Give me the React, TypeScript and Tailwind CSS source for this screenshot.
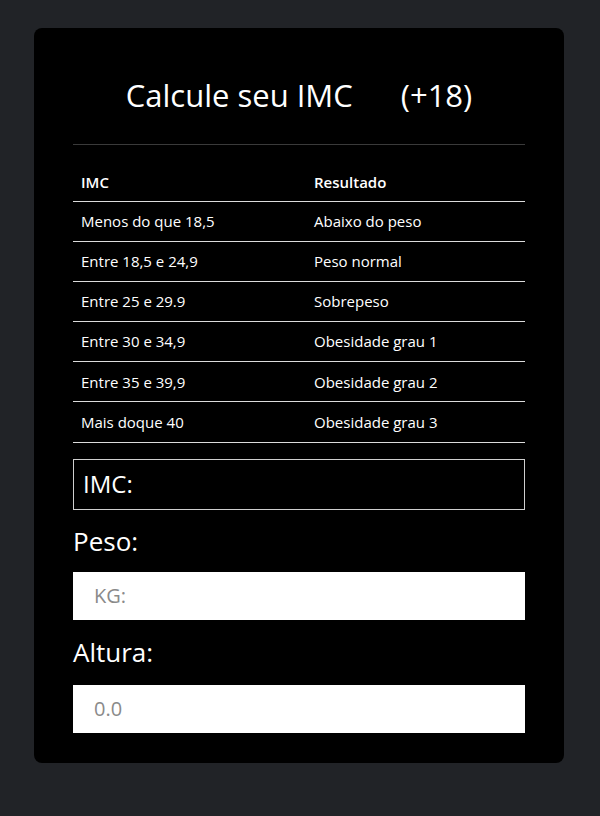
export default function App() {
  const rows = [
    ["Menos do que 18,5", "Abaixo do peso"],
    ["Entre 18,5 e 24,9", "Peso normal"],
    ["Entre 25 e 29.9", "Sobrepeso"],
    ["Entre 30 e 34,9", "Obesidade grau 1"],
    ["Entre 35 e 39,9", "Obesidade grau 2"],
    ["Mais doque 40", "Obesidade grau 3"],
  ];
  return (
    <div className="min-h-[816px] bg-[#212327] pt-[28px]" style={{ fontFamily: '"Open Sans", "Noto Sans", sans-serif' }}>
      <div className="mx-[34px] w-[530px] rounded-lg bg-black px-[39px] pb-[30px]">
        <div className="flex h-[117px] items-center justify-center border-b border-[#3a3a3a] pt-[18px] text-[31px] text-white">
          <span>Calcule seu IMC</span>
          <span className="ml-[48px]">(+18)</span>
        </div>
        <table className="mt-[19px] w-full border-collapse text-[15px] text-white">
          <thead>
            <tr className="h-[37px] border-b border-[#dcdcdc]">
              <th className="w-[233px] px-[8px] text-left font-semibold">IMC</th>
              <th className="px-[8px] text-left font-semibold">Resultado</th>
            </tr>
          </thead>
          <tbody>
            {rows.map((r) => (
              <tr key={r[0]} className="h-[40.2px] border-b border-[#dcdcdc]">
                <td className="px-[8px]">{r[0]}</td>
                <td className="px-[8px]">{r[1]}</td>
              </tr>
            ))}
          </tbody>
        </table>
        <div className="mt-[16px] flex h-[51px] items-center border border-[#cfcfcf] px-[9px] text-[24px] text-white">IMC:</div>
        <div className="mt-[12px] text-[26px] leading-[38px] text-white">Peso:</div>
        <input
          className="mt-[12px] block h-[48px] w-full bg-white px-[21px] text-[20px] text-black outline-none placeholder:text-[#8a8a8a]"
          placeholder="KG:"
        />
        <div className="mt-[13px] text-[26px] leading-[38px] text-white">Altura:</div>
        <input
          className="mt-[14px] block h-[48px] w-full bg-white px-[21px] text-[20px] text-black outline-none placeholder:text-[#8a8a8a]"
          placeholder="0.0"
        />
      </div>
    </div>
  );
}
